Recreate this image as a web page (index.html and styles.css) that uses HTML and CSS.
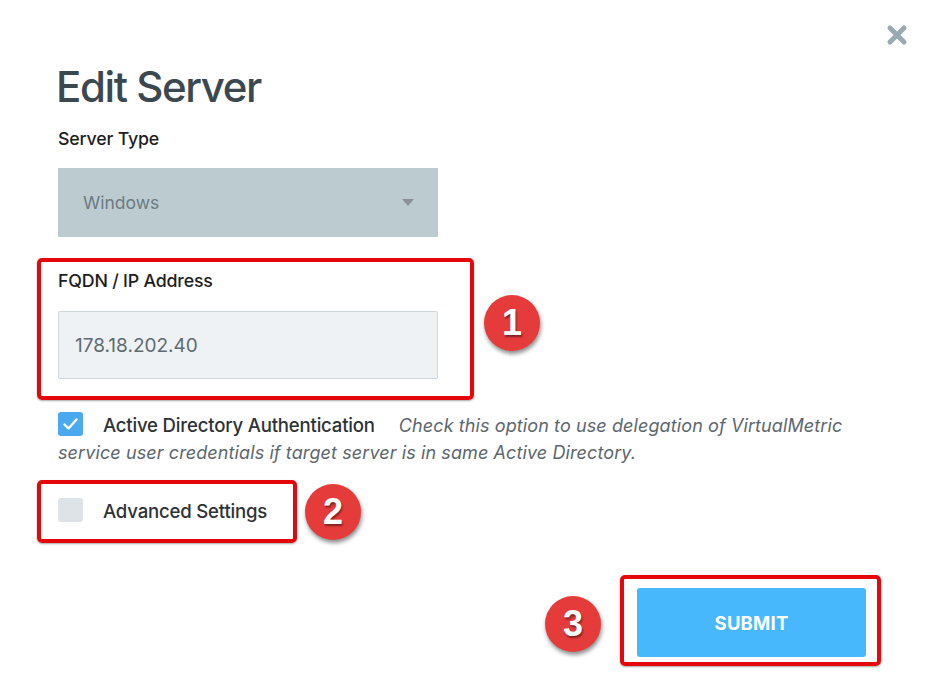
FILE: index.html
```html
<!DOCTYPE html>
<html lang="en">
<head>
<meta charset="utf-8">
<title>Edit Server</title>
<link rel="stylesheet" href="styles.css">
</head>
<body>
<div class="dialog">
  <button class="close" aria-label="Close">
    <svg width="22" height="22" viewBox="0 0 22 22"><path d="M4 4L18 18M18 4L4 18" stroke="#9aaab2" stroke-width="5" stroke-linecap="round"/></svg>
  </button>
  <h1 class="title">Edit Server</h1>
  <div class="field indent">
    <div class="label">Server Type</div>
    <div class="select">
      <span>Windows</span>
      <span class="caret"></span>
    </div>
  </div>
  <div class="mark mark-1">
    <div class="label">FQDN / IP Address</div>
    <div class="input">178.18.202.40</div>
    <span class="badge badge-1">1</span>
  </div>
  <div class="check-row indent">
    <span class="box checked">
      <svg width="25" height="24" viewBox="0 0 25 24"><path d="M6.5 12.5L10.5 16.5L18.5 7.5" fill="none" stroke="#fff" stroke-width="2.4" stroke-linecap="round" stroke-linejoin="round"/></svg>
    </span><span class="check-label">Active Directory Authentication</span><span class="hint">Check this option to use delegation of VirtualMetric service user credentials if target server is in same Active Directory.</span>
  </div>
  <div class="mark mark-2">
    <span class="box"></span><span class="check-label">Advanced Settings</span>
    <span class="badge badge-2">2</span>
  </div>
  <div class="actions">
    <div class="mark mark-3">
      <button class="submit">SUBMIT</button>
      <span class="badge badge-3">3</span>
    </div>
  </div>
</div>
</body>
</html>
```
FILE: styles.css
```css
* { box-sizing: border-box; }
html, body { margin: 0; padding: 0; background: #fff; }
body { font-family: Inter, "Noto Sans", "Liberation Sans", sans-serif; color: #222; }

.dialog {
  position: relative;
  width: 925px;
  height: 700px;
  padding: 62px 0 0 37px;
}

.close {
  position: absolute;
  top: 24px;
  left: 886px;
  width: 22px;
  height: 22px;
  padding: 0;
  border: 0;
  background: none;
}
.close svg { display: block; }

.indent { margin-left: 21px; }

.title {
  margin: 0 0 0 19px;
  font-size: 42px;
  line-height: 50px;
  font-weight: 500;
  letter-spacing: -1.4px;
  color: #3b4850;
}

.label {
  font-size: 17.8px;
  line-height: 22px;
  font-weight: 500;
  color: #1e1e1e;
  letter-spacing: -0.2px;
}

.field { margin-top: 16px; }
.field .label { margin-bottom: 18px; }

.select {
  width: 380px;
  height: 69px;
  background: #bccbd0;
  display: flex;
  align-items: center;
  justify-content: space-between;
  padding: 0 24px 0 25px;
  font-size: 17.5px;
  color: #6b7b82;
}
.caret {
  width: 0;
  height: 0;
  border-left: 6px solid transparent;
  border-right: 6px solid transparent;
  border-top: 7px solid #8a9297;
}

.mark {
  position: relative;
  border: 4px solid #e4080a;
  border-radius: 5px;
  box-shadow: 0 1px 2px rgba(0,0,0,0.35);
}

.mark-1 {
  width: 437px;
  margin-top: 21px;
  padding: 8px 0 17px 17px;
}
.mark-1 .label { margin-bottom: 19px; }

.input {
  width: 380px;
  height: 68px;
  background: #eef2f5;
  border: 1px solid #cdd7dc;
  border-radius: 2px;
  display: flex;
  align-items: center;
  padding-left: 16px;
  font-size: 19px;
  color: #5f6a70;
}

.badge {
  position: absolute;
  width: 56px;
  height: 56px;
  border-radius: 50%;
  background: #e53b3b;
  color: #fff;
  font-family: "Liberation Sans", Arial, sans-serif;
  font-weight: 700;
  font-size: 36px;
  line-height: 56px;
  text-align: center;
  box-shadow: 1px 3px 4px rgba(0,0,0,0.45);
  text-shadow: 1px 2px 2px rgba(0,0,0,0.45);
}
.badge-1 { left: 443px; top: 33px; }
.badge-2 { left: 264px; top: 0; }
.badge-3 { left: -79px; top: 17px; }

.check-row {
  margin-top: 12px;
  width: 820px;
  font-size: 18px;
  line-height: 27px;
}
.box {
  display: inline-block;
  width: 25px;
  height: 24px;
  border-radius: 3px;
  background: #dde3e6;
  vertical-align: top;
  margin-right: 20px;
}
.box svg { display: block; }
.box.checked { background: #4aa9ef; }
.check-label {
  font-size: 18.6px;
  font-weight: 500;
  color: #2e3236;
  letter-spacing: -0.2px;
  margin-right: 24px;
}
.hint {
  font-style: italic;
  color: #5c676d;
  letter-spacing: 0.1px;
}

.mark-2 {
  width: 260px;
  height: 63px;
  margin-top: 14px;
  padding: 14px 0 0 17px;
  line-height: 27px;
}

.actions {
  display: flex;
  justify-content: flex-end;
  width: 844px;
  margin-top: 32px;
}
.mark-3 {
  width: 261px;
  height: 91px;
  padding: 9px 0 0 13px;
}
.submit {
  width: 229px;
  height: 69px;
  border: 0;
  border-radius: 3px;
  background: #46b8fb;
  color: #fff;
  font-family: Inter, "Noto Sans", sans-serif;
  font-size: 18.5px;
  font-weight: 700;
  letter-spacing: 0.2px;
}
```
